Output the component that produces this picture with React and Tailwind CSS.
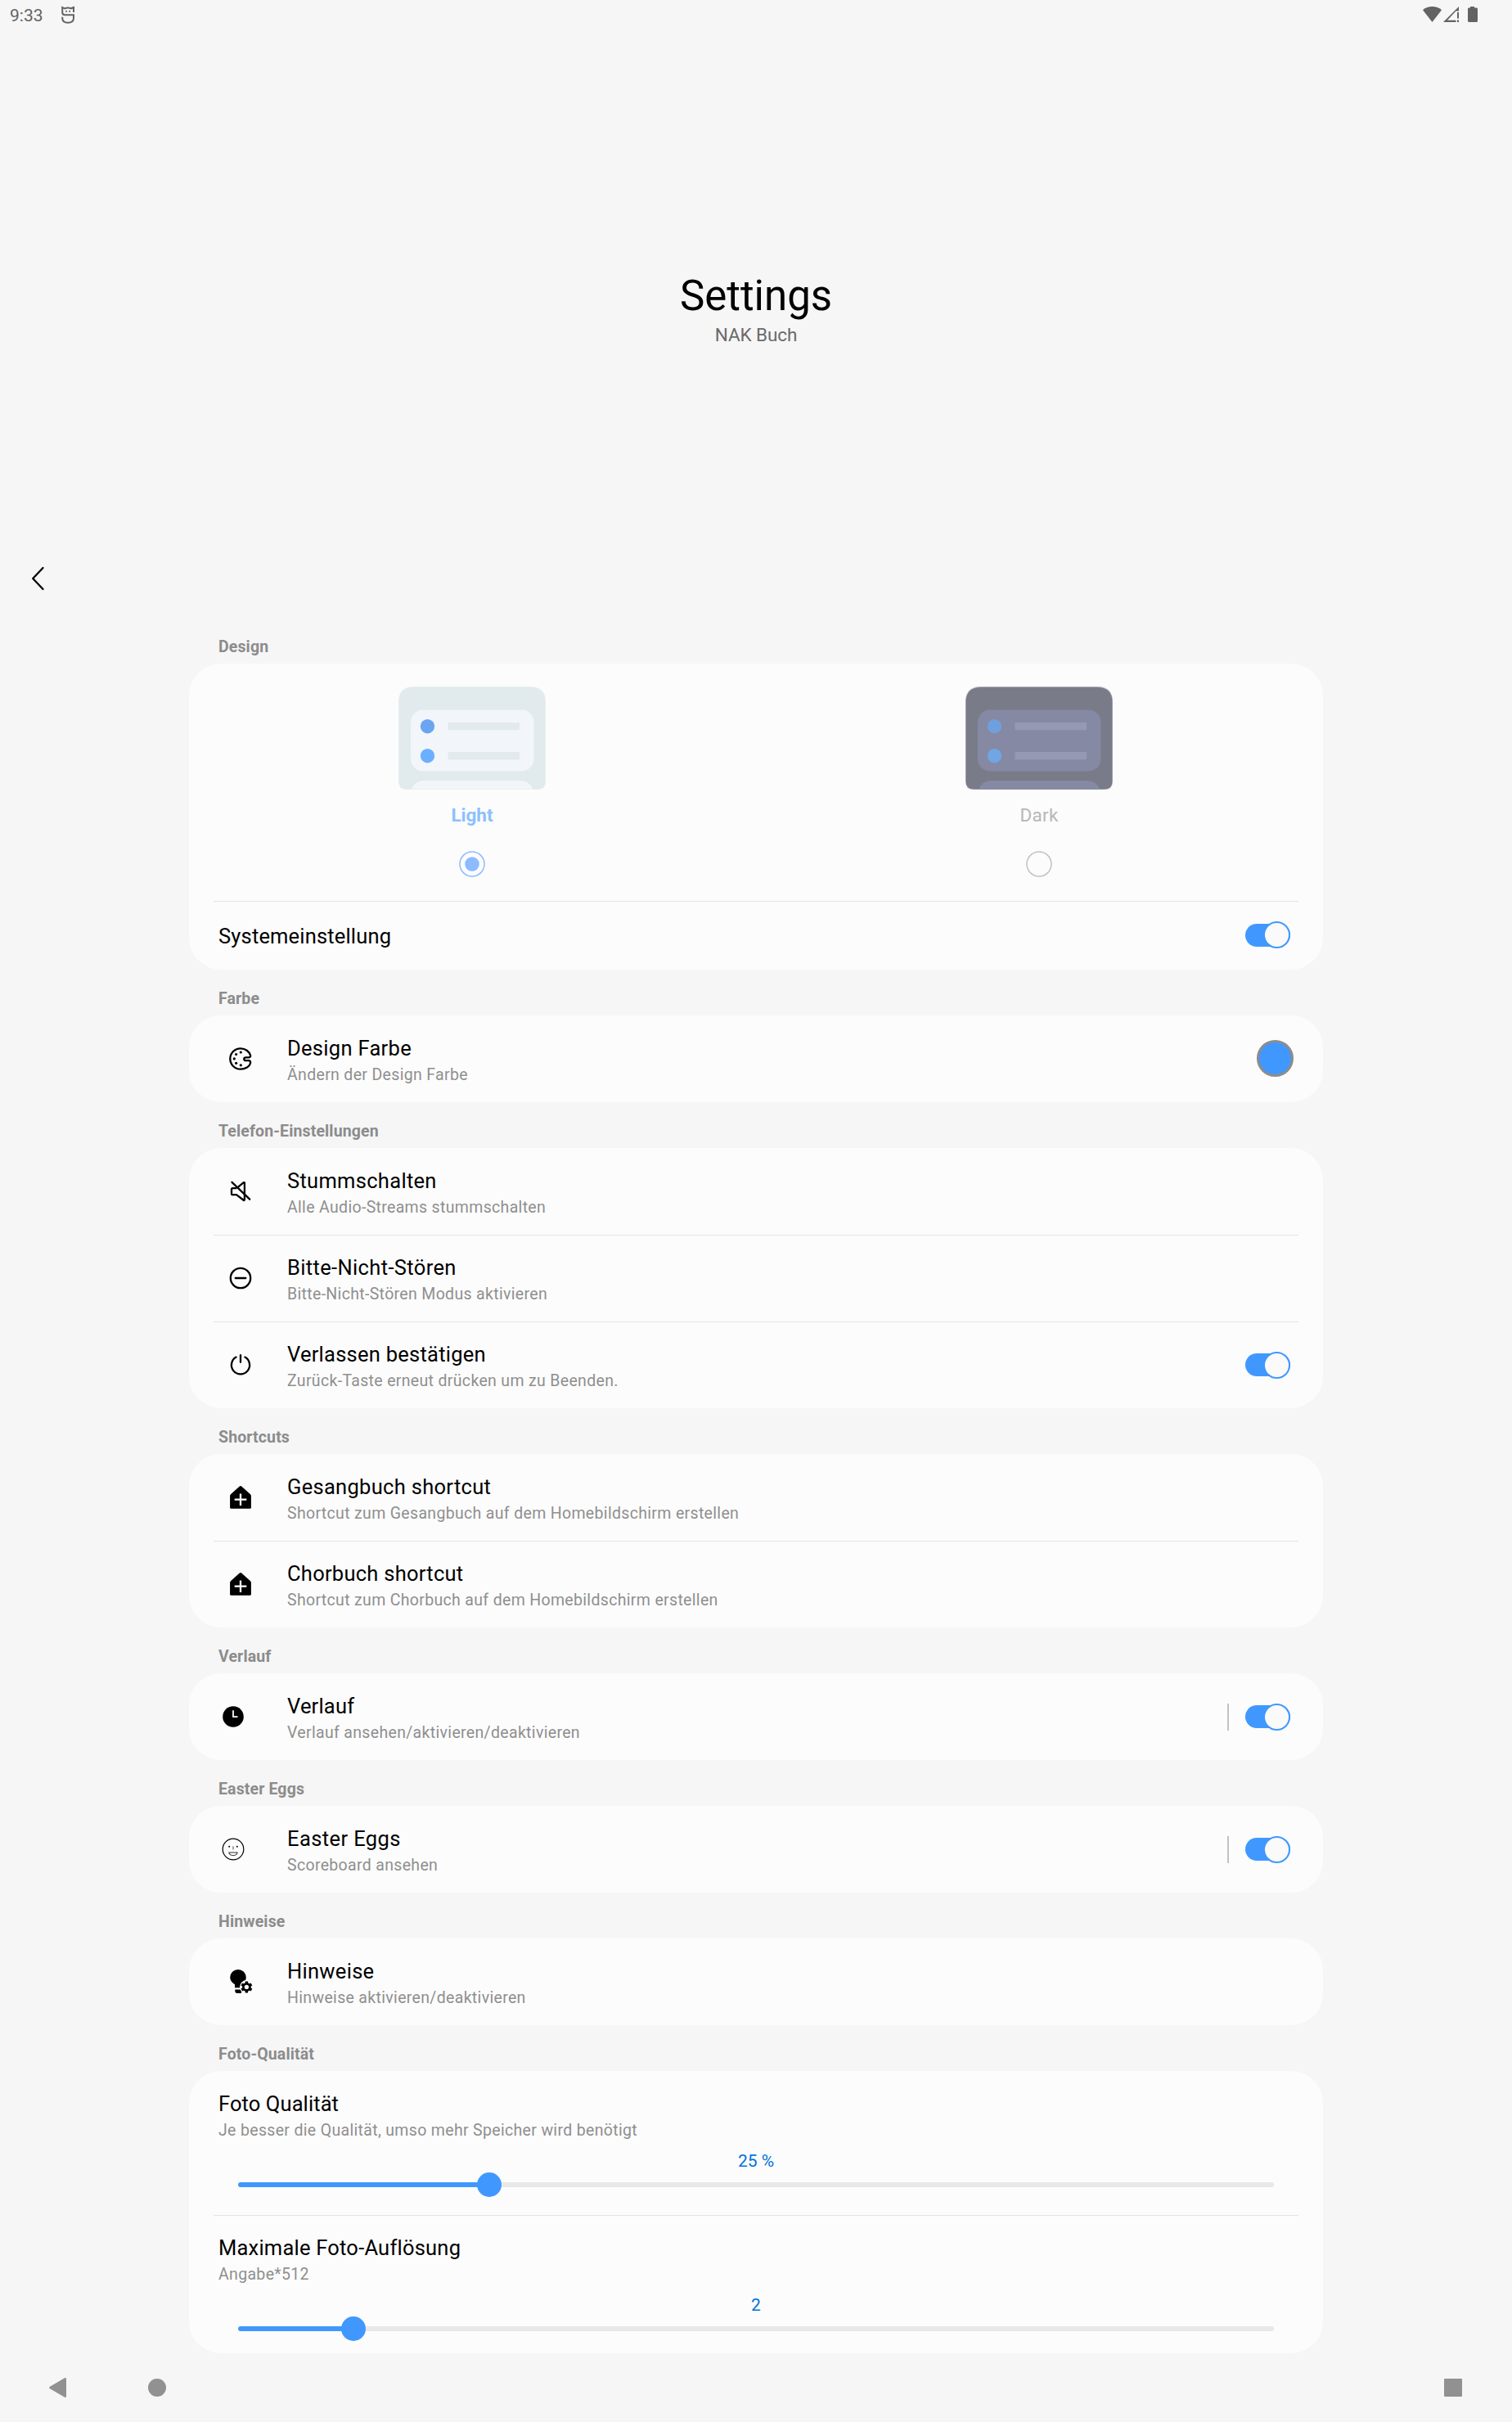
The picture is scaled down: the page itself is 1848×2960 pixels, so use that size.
import React from "react";

const Icon = ({ children }) => (
  <svg className="size-9 shrink-0" viewBox="0 0 36 36" fill="none" stroke="black" strokeWidth="2.3" strokeLinecap="round" strokeLinejoin="round">{children}</svg>
);

const PaletteIcon = () => (
  <Icon>
    <path d="M30 13.5C28.5 9 24 5.3 18 5.3A12.7 12.7 0 1 0 18 30.7C24 30.7 29 27.5 30 23.5C30.5 21.3 29.5 20.2 27.8 20.2H24.5C21.5 20.2 21.5 16.3 24.5 16.3H28C30 16.2 30.5 15 30 13.5Z" />
    <g fill="black" stroke="none">
      <circle cx="18.3" cy="10" r="1.6" />
      <circle cx="12.6" cy="12.5" r="1.6" />
      <circle cx="10.3" cy="17.9" r="1.6" />
      <circle cx="12.6" cy="23.3" r="1.6" />
      <circle cx="18.3" cy="25.8" r="1.6" />
    </g>
  </Icon>
);
const MuteIcon = () => (
  <Icon>
    <path d="M12.5 14.2H8.5Q7 14.2 7 15.7V20.7Q7 22.2 8.5 22.2H13L22 29Q22.9 29 22.9 28V7.8Q22.9 6.7 21.8 7.2L14.8 12.8" />
    <path d="M7.5 6.8L29.2 27.7" />
  </Icon>
);
const DndIcon = () => (
  <Icon>
    <circle cx="18" cy="18" r="12.2" />
    <path d="M11.7 18H24.3" />
  </Icon>
);
const PowerIcon = () => (
  <Icon>
    <path d="M18 6.2V14.8" />
    <path d="M12.6 8.6A11.1 11.1 0 1 0 23.4 8.6" />
  </Icon>
);
const HomeAddIcon = () => (
  <Icon>
    <path d="M16.8 4.6Q18 3.6 19.2 4.6L29.8 14Q30.9 15 30.9 16.4V30.4Q30.9 31.8 29.4 31.8H6.6Q5.1 31.8 5.1 30.4V16.4Q5.1 15 6.2 14Z" fill="black" stroke="none" />
    <path d="M18 13.4V28M10.7 20.7H25.3" stroke="#fcfcfc" strokeLinecap="butt" />
  </Icon>
);
const ClockIcon = () => (
  <Icon>
    <circle cx="18" cy="18" r="12.8" fill="black" stroke="none" />
    <path d="M18 11V18.2H22.8" stroke="#fcfcfc" strokeWidth="1.8" />
  </Icon>
);
const FaceIcon = () => (
  <Icon>
    <circle cx="18" cy="18" r="12.8" strokeWidth="1.2" />
    <g fill="black" stroke="none">
      <circle cx="13.2" cy="14.8" r="1" />
      <circle cx="22.8" cy="14.8" r="1" />
    </g>
    <path d="M18 14.8V18" strokeWidth="1" stroke="#444" />
    <path d="M12.8 22H23.2C22.6 24.6 20.8 25.500 18 25.500S13.400 24.600 12.800 22Z" strokeWidth="1.1" stroke="#333" />
  </Icon>
);
const BulbIcon = () => (
  <Icon>
    <g stroke="none" fill="black">
      <path d="M15 3A9.8 9.8 0 0 0 5.2 12.8C5.2 16.4 7.5 19.2 11 21.3V25.2H19V21.3C22.5 19.2 24.8 16.4 24.8 12.8A9.8 9.8 0 0 0 15 3Z" />
      <path d="M11.3 27.4H19V31.9H13.5Q11.3 31.6 11.3 29.5Z" />
      <circle cx="25.4" cy="24.4" r="8.4" fill="#fcfcfc" />
    </g>
    <circle cx="25.4" cy="24.4" r="4" strokeWidth="2.8" />
    <g strokeWidth="3.4" strokeLinecap="butt">
      <path d="M25.4 17.4V20.500M25.400 28.300V31.400M19.300 20.900L22 22.400M28.800 26.400L31.500 27.900M19.300 27.900L22 26.400M28.800 22.400L31.500 20.900" />
    </g>
  </Icon>
);

function Toggle({ className = "" }) {
  return (
    <span className={`flex h-[33px] w-[55px] shrink-0 items-center ${className}`}>
      <span className="flex h-7 w-full items-center justify-end rounded-full bg-[#4098ff]">
        <span className="size-[33px] shrink-0 rounded-full border-2 border-[#4098ff] bg-[#fafafa]" />
      </span>
    </span>
  );
}

function Preview({ bg, edge, panel, bar, dots }) {
  return (
    <svg className="h-[126px] w-[180px]" viewBox="0 0 180 126">
      <path d="M19 0H161Q180 0 180 19V116Q180 126 170 126H10Q0 126 0 116V19Q0 0 19 0Z" fill={edge} />
      <path d="M19 1H161Q179.4 1 179.4 19V116Q179.4 125.4 170 125.4H10Q.6 125.4 .6 116V19Q.6 1 19 1Z" fill={bg} />
      <rect x="15" y="28.5" width="150.5" height="75" rx="15" fill={panel} />
      <path d="M16 125.4Q21 115 31 115H149Q159 115 164.5 125.4Z" fill={panel} />
      <circle cx="35.5" cy="48.7" r="8.7" fill={dots[0]} />
      <circle cx="35.5" cy="84.7" r="8.7" fill={dots[1]} />
      <rect x="60.5" y="44" width="87.5" height="9.3" fill={bar} />
      <rect x="60.5" y="80" width="87.5" height="9.3" fill={bar} />
    </svg>
  );
}

const Radio = ({ color, checked }) => (
  <svg className="mt-[30px] size-8" viewBox="0 0 32 32" fill="none">
    <circle cx="16" cy="16" r="15" stroke={color} strokeWidth="1.5" />
    {checked && <circle cx="16" cy="16" r="8.8" fill={color} />}
  </svg>
);

const Section = ({ title, children }) => (
  <section>
    <h2 className="ml-9 flex h-14 pt-6 text-[19.5px] leading-6 font-bold tracking-[0.13px] text-[#8c8c8c]">{title}</h2>
    <div className="rounded-[39px] bg-[#fcfcfc]">{children}</div>
  </section>
);
const Divider = () => <div className="mx-[30px] -mb-px h-px bg-[#e4e4e4]" />;
const Title = ({ children, className = "" }) => (
  <div className={`text-[25.5px] leading-[30px] text-black ${className}`}>{children}</div>
);
const Summary = ({ children }) => (
  <div className="mt-1.5 text-[19.5px] leading-6 tracking-[0.33px] text-[#8f8f8f]">{children}</div>
);

const Row = ({ icon, outer, title, track = "tracking-[0.3px]", summary, children }) => (
  <div className={`flex h-[106px] pr-9 ${outer ? "pl-9" : "pl-[45px]"}`}>
    <div className={`flex items-center ${outer ? "w-[84px]" : "w-[75px]"}`}>{icon}</div>
    <div className="flex-1 pt-[25px]">
      <Title className={track}>{title}</Title>
      <Summary>{summary}</Summary>
    </div>
    <div className="flex items-center">{children}</div>
  </div>
);

const SliderRow = ({ title, track, summary, value, fill, last }) => (
  <div className={`px-9 pt-[25px] ${last ? "h-[169px]" : "h-44"}`}>
    <Title className={track}>{title}</Title>
    <Summary>{summary}</Summary>
    <div className="mt-[13px] text-center text-[21px] leading-6 text-[#0072de]">{value}</div>
    <div className="mx-6 mt-0.5 flex h-[30px] items-center">
      <div className={`h-1.5 rounded-l-full bg-[#4098ff] ${fill}`} />
      <div className="z-10 -mx-[15px] size-[30px] shrink-0 rounded-full bg-[#4098ff]" />
      <div className="h-1.5 flex-1 rounded-r-full bg-[#e8e8e8]" />
    </div>
  </div>
);

const Bar = () => <span className="mr-5 h-[33px] w-0.5 bg-[#c2c2c2]" />;

export default function App() {
  return (
    <div className="flex h-[2960px] w-[1848px] flex-col bg-[#f6f6f6] font-['Roboto',sans-serif] antialiased">
      <div className="flex h-9 items-start pl-3 text-[#636363]">
        <span className="pt-[7px] text-[21px] leading-6">9:33</span>
        <svg className="mt-[7px] ml-[21px] h-[22px] w-5" viewBox="0 0 20 22" fill="none" stroke="#636363" strokeWidth="2">
          <path d="M16 8V2L12.800 3.300Q9 1.600 5.200 3.300L2.200 2V8Q2.200 11.300 5.500 11.300H16V15Q16 20.800 9 20.800Q2.200 20.800 2.200 15V13.800" />
          <path d="M7 5.800V8M11.200 5.800V8" strokeWidth="1.500" />
        </svg>
        <div className="ml-auto flex pr-[42px]">
          <svg className="mt-2 h-[19px] w-[67px]" viewBox="0 0 67 19" fill="#636363">
            <path d="M11.5 19L0 4.200Q5 0 11.500 0T23 4.200Z" />
            <path fillRule="evenodd" d="M25 19L44 0V5.500H40.500L30 16.800H40.500V19ZM42 7H44V14.500H42ZM42 16.500H44V19H42Z" />
            <path d="M55 1.600H58V0H63V1.600H65.500Q67 1.600 67 3V17.500Q67 19 65.500 19H56.500Q55 19 55 17.500V3Q55 1.600 56.500 1.600Z" />
          </svg>
        </div>
      </div>
      <header className="flex h-[719px] flex-col items-center pt-[296px]">
        <h1 className="text-[51px] leading-[60px] text-black">Settings</h1>
        <p className="mt-[3px] text-[22.5px] leading-7 tracking-[-0.1px] text-[#6a6a6a]">NAK Buch</p>
        <svg className="mt-[268px] ml-[37px] h-8 w-5 self-start" viewBox="0 0 20 32" fill="none" stroke="black" strokeWidth="2.300" strokeLinecap="round" strokeLinejoin="round">
          <path d="M15.500 3L3.200 16L15.500 29" />
        </svg>
      </header>
      <main className="mx-[231px]">
        <Section title="Design">
          <div className="grid h-[290px] grid-cols-2">
            <div className="flex flex-col items-center pt-7 pr-px">
              <Preview bg="#e1eaed" edge="#e9eff1" panel="#f2f6fa" bar="#e2eaed" dots={["#6aa5f1", "#6ab0fe"]} />
              <div className="mt-[17px] text-[22.5px] leading-7 font-bold text-[#8cc0ff]">Light</div>
              <Radio color="#8cbcff" checked />
            </div>
            <div className="flex flex-col items-center pt-7 pr-px">
              <Preview bg="#797b89" edge="#b3b4be" panel="#8589a3" bar="#9699b4" dots={["#709fdd", "#70a6e4"]} />
              <div className="mt-[17px] text-[22.5px] leading-7 tracking-[0.3px] text-[#b7b7b7]">Dark</div>
              <Radio color="#c2c2c2" />
            </div>
          </div>
          <Divider />
          <div className="flex h-[84px] justify-between pt-7 pr-10 pl-9">
            <Title className="tracking-[0.17px]">Systemeinstellung</Title>
            <Toggle className="-mt-[3px]" />
          </div>
        </Section>
        <Section title="Farbe">
          <Row icon={<PaletteIcon />} title="Design Farbe" summary="Ändern der Design Farbe">
            <span className="-mt-px size-[45px] rounded-full border-[3px] border-[#8c8c8c] bg-[#4098ff]" />
          </Row>
        </Section>
        <Section title="Telefon-Einstellungen">
          <Row icon={<MuteIcon />} title="Stummschalten" summary="Alle Audio-Streams stummschalten" />
          <Divider />
          <Row icon={<DndIcon />} title="Bitte-Nicht-Stören" track="tracking-[0.36px]" summary="Bitte-Nicht-Stören Modus aktivieren" />
          <Divider />
          <Row icon={<PowerIcon />} title="Verlassen bestätigen" track="tracking-[0.25px]" summary="Zurück-Taste erneut drücken um zu Beenden.">
            <Toggle className="mr-1" />
          </Row>
        </Section>
        <Section title="Shortcuts">
          <Row icon={<HomeAddIcon />} title="Gesangbuch shortcut" summary="Shortcut zum Gesangbuch auf dem Homebildschirm erstellen" />
          <Divider />
          <Row icon={<HomeAddIcon />} title="Chorbuch shortcut" track="tracking-[0.26px]" summary="Shortcut zum Chorbuch auf dem Homebildschirm erstellen" />
        </Section>
        <Section title="Verlauf">
          <Row outer icon={<ClockIcon />} title="Verlauf" track="tracking-[0.2px]" summary="Verlauf ansehen/aktivieren/deaktivieren">
            <Bar />
            <Toggle className="mr-1" />
          </Row>
        </Section>
        <Section title="Easter Eggs">
          <Row outer icon={<FaceIcon />} title="Easter Eggs" track="tracking-[0.4px]" summary="Scoreboard ansehen">
            <Bar />
            <Toggle className="mr-1" />
          </Row>
        </Section>
        <Section title="Hinweise">
          <Row icon={<BulbIcon />} title="Hinweise" summary="Hinweise aktivieren/deaktivieren" />
        </Section>
        <Section title="Foto-Qualität">
          <SliderRow title="Foto Qualität" track="tracking-[0.1px]" summary="Je besser die Qualität, umso mehr Speicher wird benötigt" value="25 %" fill="w-[307px]" />
          <Divider />
          <SliderRow last title="Maximale Foto-Auflösung" track="tracking-[0.22px]" summary="Angabe*512" value="2" fill="w-[141px]" />
        </Section>
      </main>
      <nav className="flex flex-1 items-center pr-[61px] pl-[60px]">
        <svg className="h-6 w-[21px]" viewBox="0 0 21 24" fill="#919191">
          <path d="M.6 11Q-.4 12 .6 13L19 23.800Q21 24.400 21 22.600V1.400Q21 -.4 19 .2Z" />
        </svg>
        <span className="ml-[100px] size-[22px] rounded-full bg-[#919191]" />
        <span className="ml-auto size-[22px] rounded-[1px] bg-[#919191]" />
      </nav>
    </div>
  );
}
